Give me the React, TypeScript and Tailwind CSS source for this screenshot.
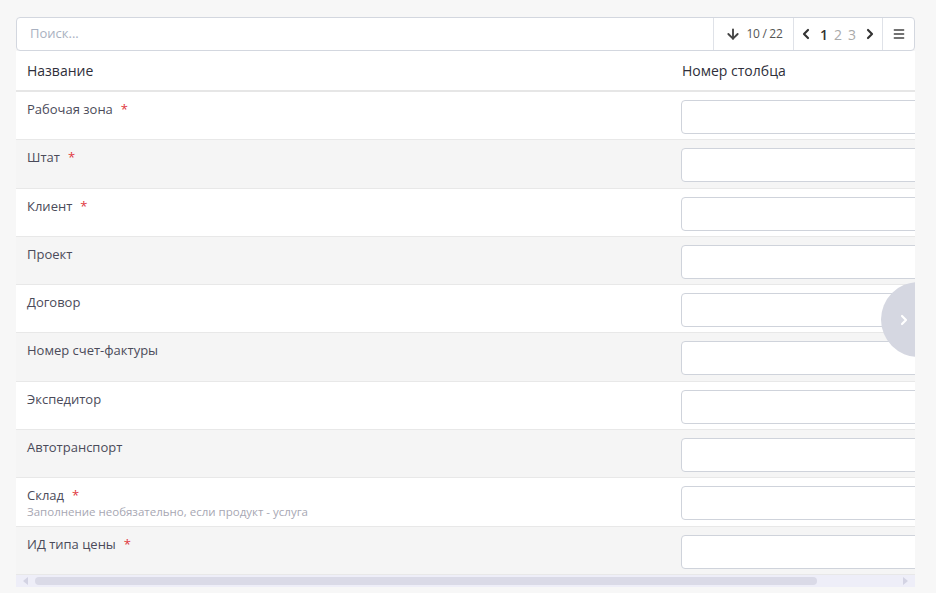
import { ArrowDown, ChevronLeft, ChevronRight, Menu } from 'lucide-react';

type Row = { label: string; required?: boolean; hint?: string };

const rows: Row[] = [
  { label: 'Рабочая зона', required: true },
  { label: 'Штат', required: true },
  { label: 'Клиент', required: true },
  { label: 'Проект' },
  { label: 'Договор' },
  { label: 'Номер счет-фактуры' },
  { label: 'Экспедитор' },
  { label: 'Автотранспорт' },
  { label: 'Склад', required: true, hint: 'Заполнение необязательно, если продукт - услуга' },
  { label: 'ИД типа цены', required: true },
];

const App = () => {
  return (
    <div className="min-h-[593px] bg-[#f7f7f7] pt-[17px] pl-4 font-['Open_Sans',sans-serif]">
      <div className="relative w-[899px] overflow-hidden">
        {/* toolbar */}
        <div className="flex h-[34px] rounded-[4px] border border-[#d3d7df] bg-white">
          <div className="flex flex-1 items-center pl-[13px] text-[13px] text-[#a9b1c1]">Поиск...</div>
          <div className="flex w-[80px] items-center justify-center gap-[6px] border-l border-[#dfe2e8] text-[12px] tracking-[-0.3px] text-[#555]">
            <ArrowDown size={16} strokeWidth={2.8} className="text-[#444]" />
            <span>10 / 22</span>
          </div>
          <div className="flex w-[89px] items-center justify-center gap-[6px] border-l border-[#dfe2e8] text-[14px]">
            <ChevronLeft size={16} strokeWidth={3.2} className="text-[#333]" />
            <span className="font-semibold text-[#333]">1</span>
            <span className="text-[#aaa]">2</span>
            <span className="text-[#aaa]">3</span>
            <ChevronRight size={16} strokeWidth={3.2} className="text-[#333]" />
          </div>
          <div className="flex w-[32px] items-center justify-center border-l border-[#dfe2e8]">
            <Menu size={14} strokeWidth={2.5} className="text-[#444]" />
          </div>
        </div>

        {/* header */}
        <div className="flex h-[41px] items-center border-b-2 border-[#e6e6e6] bg-white text-[14px] font-medium text-[#2f2f3a]">
          <div className="w-[665px] shrink-0 pl-[11px]">Название</div>
          <div className="w-[400px] shrink-0 pl-[1px]">Номер столбца</div>
        </div>

        {/* rows */}
        {rows.map((r, i) => (
          <div
            key={r.label}
            className={`flex h-[48.3px] border-b border-[#e8e8e8] ${i % 2 === 0 ? 'bg-white' : 'bg-[#f5f5f5]'}`}
          >
            <div className="w-[665px] shrink-0 pl-[11px] pt-[8px]">
              <div className="text-[13px] leading-[18px] text-[#4b4b5a]">
                {r.label}
                {r.required && <span className="ml-[8px] text-[#e0373d]">*</span>}
              </div>
              {r.hint && <div className="text-[11.5px] leading-[15px] text-[#a7a7b3]">{r.hint}</div>}
            </div>
            <div className="w-[400px] shrink-0 pt-[8px]">
              <div className="h-[34px] w-[300px] rounded-[4px] border border-[#cfd3db] bg-white" />
            </div>
          </div>
        ))}

        {/* horizontal scrollbar */}
        <div className="flex h-[12px] items-center bg-[#eeeef8]">
          <div className="flex w-[19px] justify-center">
            <div className="h-0 w-0 border-y-[4px] border-r-[5px] border-y-transparent border-r-[#d3d3e3]" />
          </div>
          <div className="h-[8px] w-[782px] rounded-full bg-[#dadae7]" />
          <div className="flex-1" />
          <div className="flex w-[19px] justify-center">
            <div className="h-0 w-0 border-y-[4px] border-l-[5px] border-y-transparent border-l-[#d3d3e3]" />
          </div>
        </div>

        {/* side circle */}
        <div className="absolute left-[865px] top-[265px] flex h-[75px] w-[75px] items-center rounded-full bg-[#d5d7e1] pl-[15px]">
          <ChevronRight size={16} strokeWidth={3.2} className="text-white" />
        </div>
      </div>
    </div>
  );
};

export default App;
